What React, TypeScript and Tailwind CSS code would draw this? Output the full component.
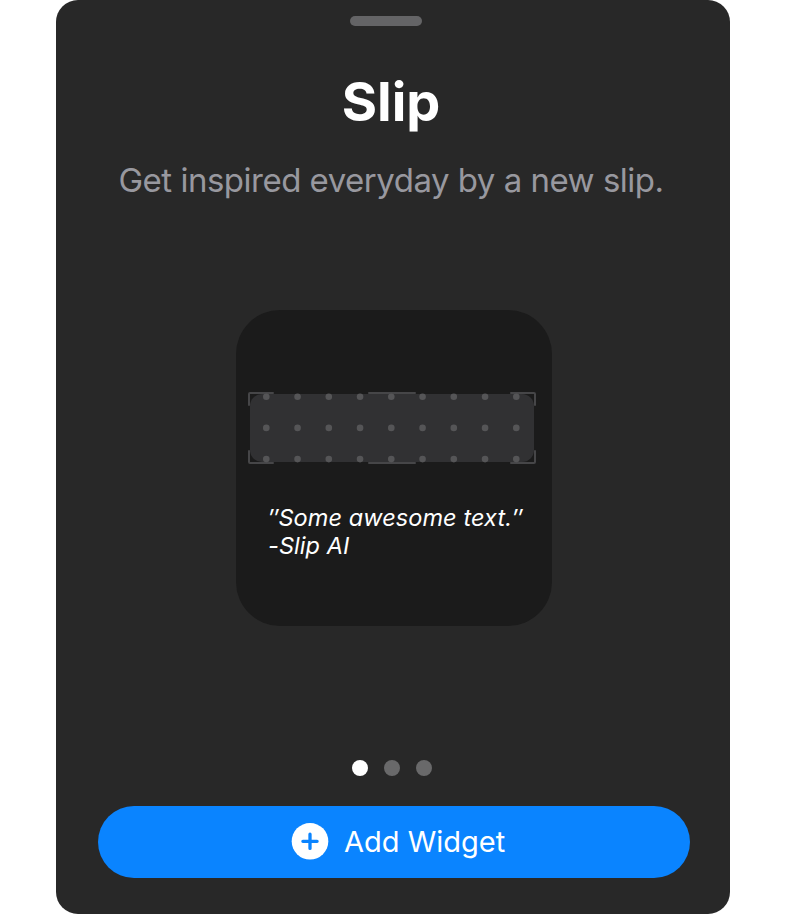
const dots = Array.from({ length: 27 }, (_, i) => ({ x: 266.3 + (i % 9) * 31.25, y: 396.7 + Math.floor(i / 9) * 31.2 }));

function SlipPattern() {
  return (
    <svg className="block h-[72px] w-[288px]" viewBox="248 392 288 72" fill="none">
      <rect x="250" y="394" width="284" height="68" rx="12" fill="#313133" />
      <path d="M249 405V394Q249 393 250 393H273M511 393H534Q535 393 535 394V405M249 451V462Q249 463 250 463H273M511 463H534Q535 463 535 462V451M369 393H415M369 463H415" stroke="#464648" strokeWidth="2" strokeLinecap="round" />
      {dots.map((d) => (
        <circle key={`${d.x}-${d.y}`} cx={d.x} cy={d.y} r="3.3" fill="#555557" />
      ))}
    </svg>
  );
}

export default function App() {
  return (
    <main className="flex h-[914px] w-[786px] justify-center overflow-hidden bg-white font-['Inter',sans-serif]">
      <section className="flex h-[914px] w-[674px] flex-col items-center rounded-[22px] bg-[#282828] pt-4">
        <div className="-ml-[14px] h-[10px] w-[72px] shrink-0 rounded-full bg-[#646466]" />
        <h1 className="mt-[42px] -ml-1 text-[54px] leading-[68px] font-bold whitespace-nowrap text-white">Slip</h1>
        <p className="mt-[23px] -ml-1 text-[33px] leading-[42px] tracking-[-0.5px] whitespace-nowrap text-[#98989f]">Get inspired everyday by a new slip.</p>
        <div className="mt-[109px] ml-[2px] flex h-[316px] w-[316px] shrink-0 flex-col rounded-[44px] bg-[#1b1b1b] px-3 pt-[82px]">
          <SlipPattern />
          <p className="mt-[40px] ml-5 text-[23.5px] leading-[28px] tracking-[0.08px] italic whitespace-nowrap text-white">″Some awesome text.″<br />-Slip AI</p>
        </div>
        <div className="mt-[134px] -ml-[2px] flex gap-4">
          <span className="size-4 rounded-full bg-white" />
          <span className="size-4 rounded-full bg-[#69696a]" />
          <span className="size-4 rounded-full bg-[#69696a]" />
        </div>
        <button className="mt-[30px] ml-[2px] flex h-[72px] w-[592px] shrink-0 items-center gap-[15px] rounded-full bg-[#0a84ff] pl-[193px] text-[29px] font-[370] text-white">
          <svg className="mb-0.5 size-[38px]" viewBox="0 0 38 38" fill="none">
            <circle cx="19" cy="19.3" r="18.3" fill="white" />
            <path d="M19 12.2V26.4M11.9 19.3H26.1" stroke="#0a84ff" strokeWidth="3.3" strokeLinecap="round" />
          </svg>
          <span className="mb-px whitespace-nowrap">Add Widget</span>
        </button>
      </section>
    </main>
  );
}
